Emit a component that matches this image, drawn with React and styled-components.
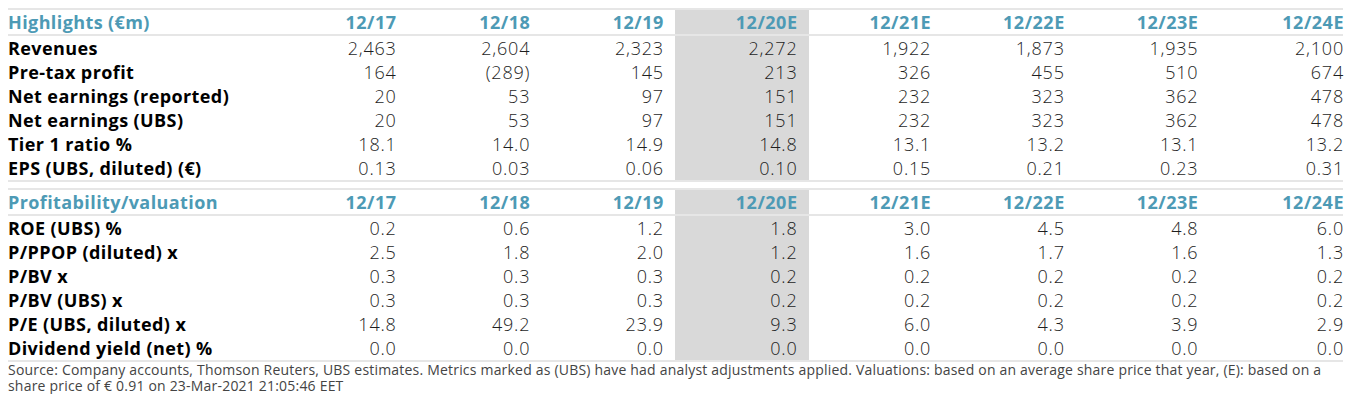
import React from 'react'
import styled, { createGlobalStyle } from 'styled-components'

const GlobalStyle = createGlobalStyle`
  body {
    margin: 0;
    background: #fff;
    font-family: "Open Sans", "Liberation Sans", sans-serif;
  }
`

const Page = styled.div`
  padding: 8px 0 0 8px;
  width: 1335px;
`

const Section = styled.div`
  border-top: 2px solid #e6e6e6;
  border-bottom: 2px solid #e6e6e6;
  & + & {
    margin-top: 6px;
  }
`

const Row = styled.div`
  display: grid;
  grid-template-columns: 266px repeat(8, 1fr);
  height: 24px;
  border-bottom: ${p => (p.$head ? '2px solid #e6e6e6' : 'none')};
`

const Label = styled.div`
  font-weight: 700;
  font-size: 18px;
  letter-spacing: 0.4px;
  line-height: 24px;
  color: ${p => (p.$head ? '#4d9ab5' : '#000')};
  white-space: nowrap;
`

const Cell = styled.div`
  text-align: right;
  padding-right: 11px;
  font-size: 18px;
  letter-spacing: ${p => (p.$head ? '0.5px' : '0.8px')};
  line-height: 24px;
  font-weight: ${p => (p.$head ? 700 : 300)};
  color: ${p => (p.$head ? '#4d9ab5' : '#1e1e1e')};
  background: ${p => (p.$hl ? '#d9d9d9' : 'transparent')};
  &:last-child {
    padding-right: 0;
    margin-right: -1px;
  }
`

const Footer = styled.div`
  font-size: 14px;
  letter-spacing: 0.2px;
  color: #444;
`

const FooterLine = styled.div`
  height: 16px;
  line-height: 16px;
  white-space: nowrap;
`

const years = ['12/17', '12/18', '12/19', '12/20E', '12/21E', '12/22E', '12/23E', '12/24E']
const HL = 3

const highlights = [
  ['Revenues', ['2,463', '2,604', '2,323', '2,272', '1,922', '1,873', '1,935', '2,100']],
  ['Pre-tax profit', ['164', '(289)', '145', '213', '326', '455', '510', '674']],
  ['Net earnings (reported)', ['20', '53', '97', '151', '232', '323', '362', '478']],
  ['Net earnings (UBS)', ['20', '53', '97', '151', '232', '323', '362', '478']],
  ['Tier 1 ratio %', ['18.1', '14.0', '14.9', '14.8', '13.1', '13.2', '13.1', '13.2']],
  ['EPS (UBS, diluted) (€)', ['0.13', '0.03', '0.06', '0.10', '0.15', '0.21', '0.23', '0.31']],
]

const valuation = [
  ['ROE (UBS) %', ['0.2', '0.6', '1.2', '1.8', '3.0', '4.5', '4.8', '6.0']],
  ['P/PPOP (diluted) x', ['2.5', '1.8', '2.0', '1.2', '1.6', '1.7', '1.6', '1.3']],
  ['P/BV x', ['0.3', '0.3', '0.3', '0.2', '0.2', '0.2', '0.2', '0.2']],
  ['P/BV (UBS) x', ['0.3', '0.3', '0.3', '0.2', '0.2', '0.2', '0.2', '0.2']],
  ['P/E (UBS, diluted) x', ['14.8', '49.2', '23.9', '9.3', '6.0', '4.3', '3.9', '2.9']],
  ['Dividend yield (net) %', ['0.0', '0.0', '0.0', '0.0', '0.0', '0.0', '0.0', '0.0']],
]

function Table({ title, rows }) {
  return (
    <Section>
      <Row $head>
        <Label $head>{title}</Label>
        {years.map((y, i) => (
          <Cell key={y} $head $hl={i === HL}>{y}</Cell>
        ))}
      </Row>
      {rows.map(([label, vals]) => (
        <Row key={label}>
          <Label>{label}</Label>
          {vals.map((v, i) => (
            <Cell key={i} $hl={i === HL}>{v}</Cell>
          ))}
        </Row>
      ))}
    </Section>
  )
}

export default function App() {
  return (
    <Page>
      <GlobalStyle />
      <Table title="Highlights (€m)" rows={highlights} />
      <Table title="Profitability/valuation" rows={valuation} />
      <Footer>
        <FooterLine>
          Source: Company accounts, Thomson Reuters, UBS estimates. Metrics marked as (UBS) have had analyst adjustments applied. Valuations: based on an average share price that year, (E): based on a
        </FooterLine>
        <FooterLine>share price of € 0.91 on 23-Mar-2021 21:05:46 EET</FooterLine>
      </Footer>
    </Page>
  )
}
